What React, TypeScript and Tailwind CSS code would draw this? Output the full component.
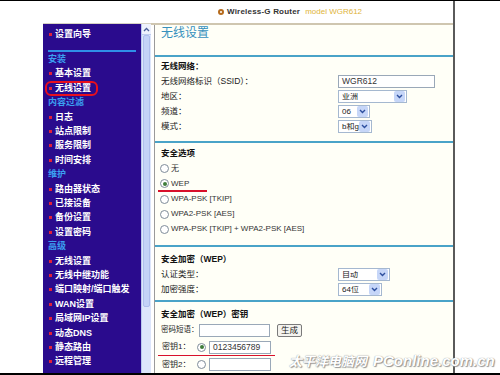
import React from 'react';

type NavRow = { text: string; label?: boolean; ring?: boolean };

const navRows: NavRow[] = [
  { text: '安装', label: true },
  { text: '基本设置' },
  { text: '无线设置', ring: true },
  { text: '内容过滤', label: true },
  { text: '日志' },
  { text: '站点限制' },
  { text: '服务限制' },
  { text: '时间安排' },
  { text: '维护', label: true },
  { text: '路由器状态' },
  { text: '已接设备' },
  { text: '备份设置' },
  { text: '设置密码' },
  { text: '高级', label: true },
  { text: '无线设置' },
  { text: '无线中继功能' },
  { text: '端口映射/端口触发' },
  { text: 'WAN设置' },
  { text: '局域网IP设置' },
  { text: '动态DNS' },
  { text: '静态路由' },
  { text: '远程管理' },
];

function NavItem({ text, ring }: { text: string; ring?: boolean }) {
  return (
    <div className="relative flex items-center h-[14.4px] pl-[6px] gap-[3px]">
      <span className="w-[3px] h-[3px] bg-[#e0203a]" />
      <span className="text-[9px] font-bold text-white leading-none whitespace-nowrap">{text}</span>
      {ring && (
        <span className="absolute left-[2px] top-[0px] w-[53px] h-[15px] rounded-[6px] border-2 border-[#e8101e]" />
      )}
    </div>
  );
}

function Chevron() {
  return (
    <svg width="7" height="5" viewBox="0 0 7 5">
      <path d="M1 1 L3.5 3.5 L6 1" fill="none" stroke="#2d4f9e" strokeWidth="1.4" />
    </svg>
  );
}

function Select({ className, value }: { className: string; value: string }) {
  return (
    <div className={`flex items-center h-[13px] border border-[#a5b8d0] bg-white ${className}`}>
      <span className="flex-1 pl-[3px] text-[8px] leading-none text-[#222] whitespace-nowrap overflow-hidden">{value}</span>
      <span className="w-[11px] h-[11px] shrink-0 mr-[1px] bg-[#c6d6f8] rounded-[2px] flex items-center justify-center">
        <Chevron />
      </span>
    </div>
  );
}

function Radio({ checked }: { checked?: boolean }) {
  return (
    <span className="w-[9px] h-[9px] shrink-0 rounded-full border border-[#7f8c99] bg-white flex items-center justify-center">
      {checked && <span className="w-[4px] h-[4px] rounded-full bg-[#3f7d3a]" />}
    </span>
  );
}

function Row({ label, children }: { label: string; children?: React.ReactNode }) {
  return (
    <div className="flex items-center h-[15px]">
      <span className="w-[177px] text-[8.5px] text-[#222] leading-none whitespace-nowrap">{label}</span>
      {children}
    </div>
  );
}

function Heading({ children }: { children: React.ReactNode }) {
  return <div className="flex items-center h-[15px] text-[8.5px] font-bold text-[#111] leading-none whitespace-nowrap">{children}</div>;
}

function RadioRow({ text, checked }: { text: string; checked?: boolean }) {
  return (
    <div className="flex items-center h-[15.2px] pl-[5px] gap-[2px]">
      <Radio checked={checked} />
      <span className="text-[8px] text-[#333] leading-none whitespace-nowrap">{text}</span>
    </div>
  );
}

const divider = 'border-t-2 border-[#4aa3c8]';

export default function App() {
  return (
    <div className="relative w-[500px] h-[375px] overflow-hidden bg-white border-t border-b-2 border-black font-['Liberation_Sans','Noto_Sans_CJK_SC',sans-serif]">
      <div className="flex h-full">
        <div className="w-[43px] shrink-0" />

        {/* left menu */}
        <div className="w-[108px] shrink-0 flex flex-col">
          <div className="h-[23px] shrink-0 border-b border-[#d6d2c4]" />
          <div className="flex flex-1 min-h-0">
            <nav className="w-[98px] bg-[#2a0b8d] pt-[3px]">
              <NavItem text="设置向导" />
              <div className="mt-[9px] mx-[5px] h-[2px] bg-[#2f8fe8]" />
              {navRows.map((r, i) =>
                r.label ? (
                  <div key={i} className="flex items-center h-[14.4px] pl-[5px] text-[9px] font-bold text-[#3b9ff0] leading-none">
                    {r.text}
                  </div>
                ) : (
                  <NavItem key={i} text={r.text} ring={r.ring} />
                )
              )}
            </nav>
            <div className="w-[10px] flex flex-col bg-[#dde6fb] border-l border-[#b8c7ee]">
              <div className="h-[11px] flex items-center justify-center bg-[#eef2fd] border-b border-[#c0cdef]">
                <svg width="7" height="5" viewBox="0 0 7 5">
                  <path d="M1 4 L3.5 1.5 L6 4" fill="none" stroke="#4a5f99" strokeWidth="1.3" />
                </svg>
              </div>
              <div className="h-[272px] mx-[1px] bg-[#c4d3f7] border border-[#aebfed] rounded-[2px]" />
            </div>
          </div>
        </div>

        {/* right frame */}
        <div className="w-[304px] shrink-0 flex flex-col border-r-2 border-[#5a5a5a]">
          <div className="h-[24px] shrink-0 border-b-2 border-[#cfc6b0] flex items-center pl-[67px] gap-[3px] text-[8px] leading-none">
            <span className="w-[6px] h-[6px] rounded-full border-2 border-[#b56a1c]" />
            <span className="text-[#333] font-bold tracking-[0.2px]">Wireless-G Router</span>
            <span className="text-[#e0b43a] ml-[2px]">model WGR612</span>
          </div>
          <div className="flex flex-1 min-h-0">
            <div className="w-[3px] shrink-0" />
            <main className="flex-1 border-l border-[#9a9a9a] bg-[#fffff7] flex flex-col">
              <div className="h-[35px] pl-[6px] text-[12px] leading-[16px] text-[#3590bd]">无线设置</div>

              <section className={`${divider} pl-[6px] pt-[2px] pb-[7px]`}>
                <Heading>无线网络：</Heading>
                <Row label="无线网络标识（SSID）：">
                  <div className="w-[97px] h-[13px] border border-[#9aa8b8] bg-white pl-[3px] flex items-center text-[8.5px] text-[#333] leading-none">
                    WGR612
                  </div>
                </Row>
                <Row label="地区：">
                  <Select className="w-[69px]" value="亚洲" />
                </Row>
                <Row label="频道：">
                  <Select className="w-[32px]" value="06" />
                </Row>
                <Row label="模式：">
                  <Select className="w-[34px]" value="b和g" />
                </Row>
              </section>

              <section className={`${divider} pt-[3px] pb-[8px]`}>
                <div className="pl-[6px]">
                  <Heading>安全选项</Heading>
                </div>
                <RadioRow text="无" />
                <div className="relative">
                  <RadioRow text="WEP" checked />
                  <div className="absolute left-[3px] top-[14px] w-[49px] h-[2px] bg-[#d8102a]" />
                </div>
                <RadioRow text="WPA-PSK [TKIP]" />
                <RadioRow text="WPA2-PSK [AES]" />
                <RadioRow text="WPA-PSK [TKIP] + WPA2-PSK [AES]" />
              </section>

              <section className={`${divider} pl-[6px] pt-[5px] pb-[3px]`}>
                <Heading>安全加密（WEP）</Heading>
                <Row label="认证类型：">
                  <Select className="w-[52px]" value="自动" />
                </Row>
                <Row label="加密强度：">
                  <Select className="w-[44px]" value="64位" />
                </Row>
              </section>

              <section className={`${divider} pt-[5px]`}>
                <div className="pl-[6px]">
                  <Heading>安全加密（WEP）密钥</Heading>
                </div>
                <div className="flex items-center h-[16px] pl-[6px]">
                  <span className="w-[38px] text-[7.5px] text-[#222] leading-none whitespace-nowrap">密码短语：</span>
                  <span className="w-[71px] h-[13px] border border-[#9aa8b8] bg-white" />
                  <span className="ml-[7px] h-[13px] px-[3px] flex items-center border border-[#7a7a7a] rounded-[2px] bg-[#f4f3ee] text-[8.5px] leading-none text-[#222]">
                    生成
                  </span>
                </div>
                <div className="relative flex items-center h-[18px] pl-[7px]">
                  <span className="w-[35px] text-[8px] text-[#222] leading-none whitespace-nowrap">密钥1：</span>
                  <Radio checked />
                  <span className="ml-[3px] w-[62px] h-[13px] border border-[#9aa8b8] bg-white pl-[3px] flex items-center text-[8.5px] text-[#333] leading-none">
                    0123456789
                  </span>
                  <div className="absolute left-[3px] bottom-[0px] w-[117px] h-[1.5px] bg-[#d8102a]" />
                </div>
                <div className="flex items-center h-[17px] pl-[7px]">
                  <span className="w-[35px] text-[8px] text-[#222] leading-none whitespace-nowrap">密钥2：</span>
                  <Radio />
                  <span className="ml-[3px] w-[62px] h-[13px] border border-[#9aa8b8] bg-white" />
                </div>
              </section>
            </main>
          </div>
        </div>
      </div>

      <div className="absolute left-[289px] bottom-[5px] flex items-baseline gap-[6px] text-white italic font-bold leading-none [text-shadow:0_0_1px_#777,1px_1px_1px_#999]">
        <span className="text-[13px] font-['Noto_Sans_CJK_SC',sans-serif]">太平洋电脑网</span>
        <span className="text-[15px] font-['Liberation_Sans',sans-serif]">PConline.com.cn</span>
      </div>
    </div>
  );
}
